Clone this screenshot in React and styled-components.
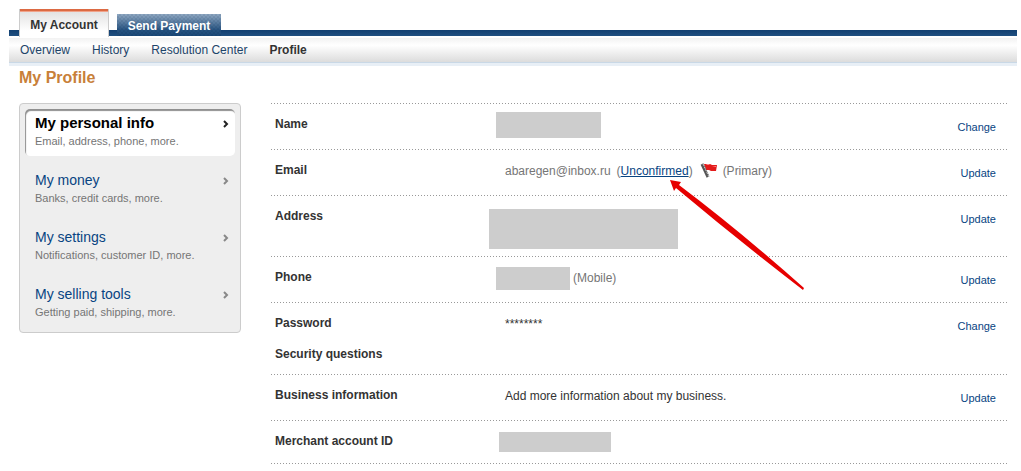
import React from "react";
import styled, { createGlobalStyle } from "styled-components";

const GlobalStyle = createGlobalStyle`
  body {
    margin: 0;
    background: #fff;
    color: #333;
    font-family: "Liberation Sans", Arial, sans-serif;
    font-size: 12px;
    line-height: 16px;
  }
  a {
    color: #084482;
    text-decoration: none;
  }
`;

const Page = styled.div`
  padding: 9px 4px 0 9px;
`;

// fine weave that lies over the blue parts of the tab bar
const weave =
  "repeating-conic-gradient(rgba(0, 20, 50, 0.08) 0 25%, transparent 0 50%) 0 0 / 4px 4px";

const Tabs = styled.nav`
  display: flex;
  align-items: flex-end;
  gap: 8px;
  height: 27px;
  padding: 0 10px;
  background: linear-gradient(#123f70, #1f4f80) bottom / 100% 6px no-repeat;
`;

const Tab = styled.a`
  box-sizing: border-box;
  font-weight: bold;
  text-align: center;
  ${props =>
    props.$active
      ? `
    width: 90px;
    height: 28px;
    margin-bottom: -1px;
    padding-top: 8px;
    color: #333;
    border: solid #ccc;
    border-width: 0 1px;
    background: linear-gradient(#dc6a43 2px, #f0a38a 2px 3px, #e3e3e3 3px, #fff 22px);
  `
      : `
    width: 104px;
    height: 22px;
    padding-top: 4px;
    color: #fff;
    background: ${weave}, linear-gradient(#8fa8c2, #24517f 75%, #1a4877);
  `}
`;

const SubNav = styled.nav`
  display: flex;
  gap: 22px;
  height: 24px;
  margin-top: 2px;
  padding: 0 11px;
  line-height: 24px;
  background: linear-gradient(#f2f2f2, #fff 30%, #dcdcdc);
  border-bottom: 1px solid #c9d8e6;
  box-shadow: 0 3px #e8eff6;
`;

const SubNavLink = styled.a`
  color: ${props => (props.$active ? "#333" : "#1d4469")};
  font-weight: ${props => (props.$active ? "bold" : "normal")};
`;

const Title = styled.h1`
  margin: 5px 10px 15px;
  color: #c88039;
  font-size: 16px;
  line-height: 20px;
`;

const Content = styled.main`
  display: grid;
  grid-template-columns: 222px 1fr;
  align-items: start;
  gap: 29px;
  padding: 0 9px 0 10px;
`;

const Sidebar = styled.nav`
  padding: 5px;
  background: #eee;
  border: 1px solid #ccc;
  border-radius: 4px;
`;

const SidebarItem = styled.a`
  display: grid;
  grid-template-columns: 1fr auto;
  align-content: start;
  box-sizing: border-box;
  height: 47px;
  padding: 5px 6px 0 10px;
  border-radius: 5px;
  color: ${props => (props.$active ? "#000" : "#084482")};
  background: ${props => (props.$active ? "#fff" : "none")};
  box-shadow: ${props => (props.$active ? "inset 1px 2px 1px #909090" : "none")};
  & + & {
    margin-top: 10px;
  }
`;

const ItemName = styled.span`
  font-size: ${props => (props.$active ? 15 : 14)}px;
  line-height: 18px;
  font-weight: ${props => (props.$active ? "bold" : "normal")};
`;

const ItemHint = styled.span`
  color: #757575;
  font-size: 11px;
  line-height: 18px;
`;

const Chevron = styled.svg`
  width: 6px;
  height: 8px;
  margin-top: 6px;
  fill: none;
  stroke: ${props => (props.$active ? "#222" : "#888")};
  stroke-width: 2;
`;

const dots = "repeating-linear-gradient(90deg, transparent 0 1px, #999 1px 2px, transparent 2px 3px)";

const InfoList = styled.div`
  padding-bottom: 1px;
  background: ${dots} bottom / 100% 1px no-repeat;
`;

const Row = styled.section`
  display: grid;
  grid-template-columns: 214px 1fr auto;
  align-items: start;
  box-sizing: border-box;
  min-height: ${props => props.$height}px;
  padding: 0 12px 0 5px;
  background: ${props => (props.$plain ? "none" : `${dots} top / 100% 1px no-repeat`)};
`;

const Label = styled.h2`
  margin: ${props => (props.$plain ? 3 : 13)}px 0 0;
  font-size: 12px;
  line-height: 16px;
`;

const Value = styled.div`
  display: flex;
  align-items: center;
  min-height: 28px;
  margin-top: ${props => (props.$tall ? 14 : 8)}px;
  padding-left: ${props => props.$indent || 0}px;
  gap: ${props => props.$gap || 0}px;
  color: ${props => (props.$muted ? "#757575" : "#333")};
`;

const Redacted = styled.div`
  width: ${props => props.$width}px;
  height: ${props => props.$height}px;
  background: #cdcdcd;
`;

const Unconfirmed = styled.a`
  text-decoration: underline;
`;

const Action = styled.a`
  margin-top: 16px;
  font-size: 11px;
`;

const Status = styled.span`
  position: relative;
`;

const Flag = styled.svg`
  width: 18px;
  height: 16px;
`;

const Pointer = styled.svg`
  position: absolute;
  left: 53px;
  top: 17px;
  width: 136px;
  height: 112px;
  pointer-events: none;
`;

const MENU = [
  { name: "My personal info", hint: "Email, address, phone, more.", active: true },
  { name: "My money", hint: "Banks, credit cards, more." },
  { name: "My settings", hint: "Notifications, customer ID, more." },
  { name: "My selling tools", hint: "Getting paid, shipping, more." },
];

const App = () => {
  return (
    <>
      <GlobalStyle />
      <Page>
        <Tabs>
          <Tab href="#account" $active>My Account</Tab>
          <Tab href="#send">Send Payment</Tab>
        </Tabs>
        <SubNav>
          <SubNavLink href="#overview">Overview</SubNavLink>
          <SubNavLink href="#history">History</SubNavLink>
          <SubNavLink href="#resolution">Resolution Center</SubNavLink>
          <SubNavLink href="#profile" $active>Profile</SubNavLink>
        </SubNav>
        <Title>My Profile</Title>
        <Content>
          <Sidebar>
            {MENU.map(({ name, hint, active }) => (
              <SidebarItem key={name} href="#menu" $active={active}>
                <ItemName $active={active}>{name}</ItemName>
                <Chevron viewBox="0 0 6 8" $active={active}>
                  <path d="M1 1l3 3-3 3" />
                </Chevron>
                <ItemHint>{hint}</ItemHint>
              </SidebarItem>
            ))}
          </Sidebar>

          <InfoList>
            <Row $height={46}>
              <Label>Name</Label>
              <Value $indent={7}><Redacted $width={105} $height={26} /></Value>
              <Action href="#name">Change</Action>
            </Row>
            <Row $height={46}>
              <Label>Email</Label>
              <Value $indent={16} $gap={6} $muted>
                <span>abaregen@inbox.ru</span>
                <Status>
                  (<Unconfirmed href="#confirm">Unconfirmed</Unconfirmed>)
                  <Pointer viewBox="0 0 136 112">
                    <path d="M0 0L11 2L9 5Q70 51 134 108L133 110Q68 60 6 8L4 11Z" fill="#e60000" />
                  </Pointer>
                </Status>
                <Flag viewBox="0 0 18 16">
                  <path d="M5 1l6 0 2 1 5 0-1 6-5 0-2-1-3 0z" fill="#e31b1b" />
                  <path d="M7 1l3 0 1 1-3 0zM13 3l4 0v1l-4-1z" fill="#f88" />
                  <path d="M3 1l6 13" stroke="#555" strokeWidth="3" />
                  <path d="M4 1l6 13" stroke="#ccc" strokeWidth="1" strokeDasharray="2 1" />
                </Flag>
                <span>(Primary)</span>
              </Value>
              <Action href="#email">Update</Action>
            </Row>
            <Row $height={61}>
              <Label>Address</Label>
              <Value $tall><Redacted $width={189} $height={40} /></Value>
              <Action href="#address">Update</Action>
            </Row>
            <Row $height={46}>
              <Label>Phone</Label>
              <Value $indent={7} $gap={3} $muted>
                <Redacted $width={74} $height={23} />
                <span>(Mobile)</span>
              </Value>
              <Action href="#phone">Update</Action>
            </Row>
            <Row $height={41}>
              <Label>Password</Label>
              <Value $indent={16}>********</Value>
              <Action href="#password">Change</Action>
            </Row>
            <Row $height={31} $plain>
              <Label $plain>Security questions</Label>
            </Row>
            <Row $height={46}>
              <Label>Business information</Label>
              <Value $indent={16}>Add more information about my business.</Value>
              <Action href="#business">Update</Action>
            </Row>
            <Row $height={43}>
              <Label>Merchant account ID</Label>
              <Value $indent={10}><Redacted $width={112} $height={20} /></Value>
            </Row>
          </InfoList>
        </Content>
      </Page>
    </>
  );
};

export default App;
